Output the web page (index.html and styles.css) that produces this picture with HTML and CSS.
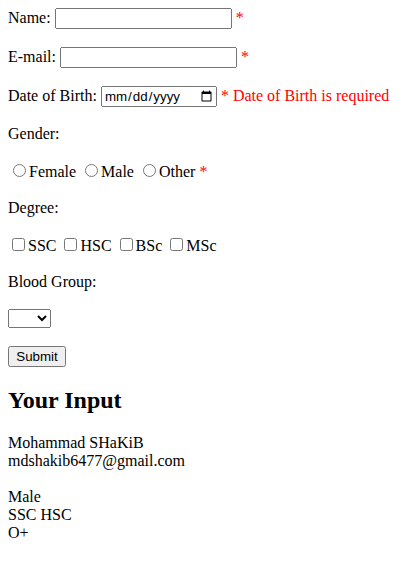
FILE: index.html
```html
<!DOCTYPE html>
<html>
<head>
<meta charset="utf-8">
<link rel="stylesheet" href="styles.css">
</head>
<body>
<form class="form">
  <label>Name: </label><input type="text" class="txt"> <span class="req">*</span><br><br>
  <label>E-mail: </label><input type="email" class="txt"> <span class="req">*</span><br><br>
  <label>Date of Birth: </label><input type="date" class="date"> <span class="err">* Date of Birth is required</span><br><br>
  <label>Gender:</label><br><br>
  <input type="radio" name="g">Female <input type="radio" name="g">Male <input type="radio" name="g">Other <span class="req">*</span><br><br>
  <label>Degree:</label><br><br>
  <input type="checkbox">SSC <input type="checkbox">HSC <input type="checkbox">BSc <input type="checkbox">MSc<br><br>
  <label>Blood Group:</label><br><br>
  <select class="sel"><option></option></select><br><br>
  <input type="submit" value="Submit" class="btn">
</form>
<h2 class="title">Your Input</h2>
<div class="out">
  Mohammad SHaKiB<br>
  mdshakib6477@gmail.com<br>
  <br>
  Male<br>
  SSC HSC <br>
  O+
</div>
</body>
</html>
```
FILE: styles.css
```css
body {
  font-family: "Liberation Serif", serif;
  font-size: 16px;
  margin: 8px;
}
input, select, button {
  font-family: "Liberation Sans", sans-serif;
}
.txt {
  box-sizing: border-box;
  width: 177px;
}
.date {
  box-sizing: border-box;
  width: 116px;
}
.sel {
  box-sizing: border-box;
  width: 43px;
  height: 19px;
}
.btn {
  box-sizing: border-box;
  width: 58px;
  height: 21px;
}
.req, .err {
  color: red;
  font-family: "Liberation Serif", serif;
}
.title {
  font-size: 1.5em;
  margin: 0.83em 0;
}
```
